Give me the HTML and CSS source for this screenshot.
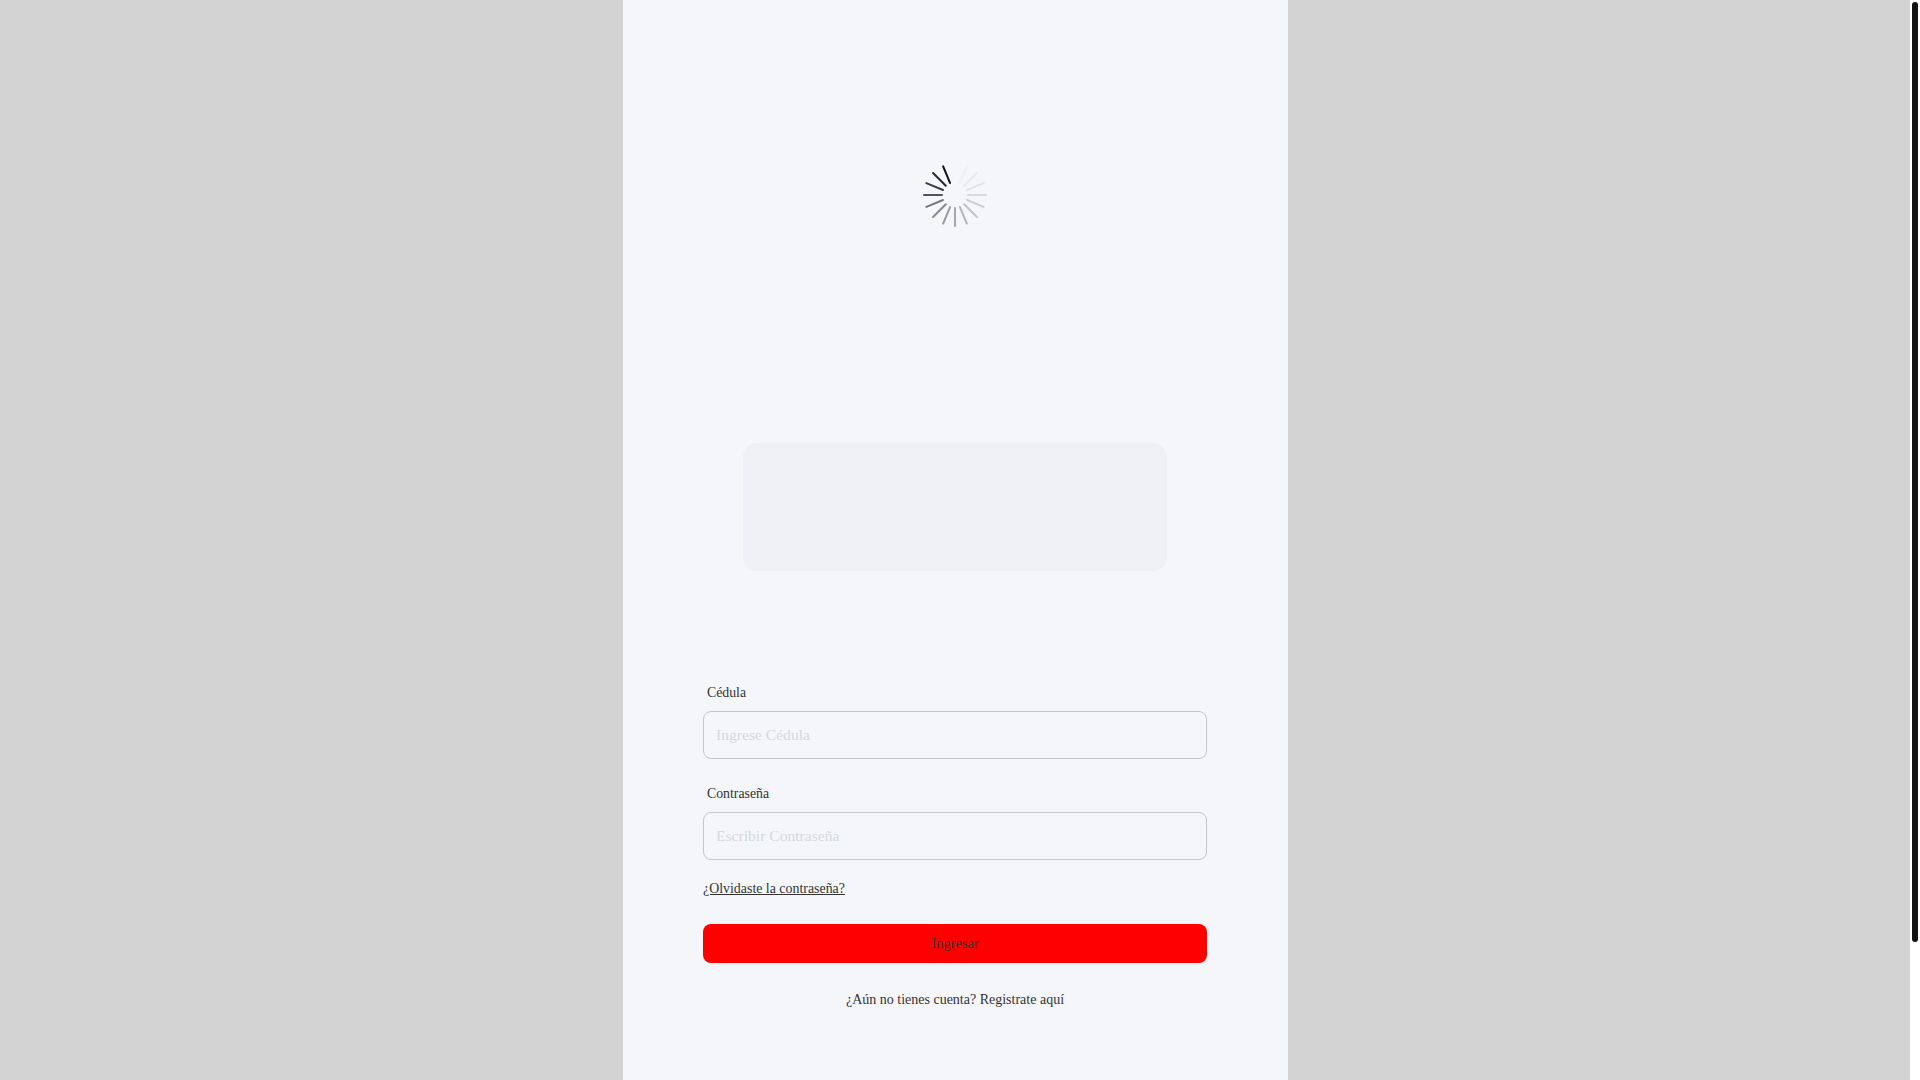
FILE: index.html
```html
<!DOCTYPE html>
<html lang="es">
<head>
    <meta charset="UTF-8">
    <meta name="viewport" content="width=device-width, initial-scale=1.0">
    <title>Ingresar</title>
    <link rel="stylesheet" href="styles.css">
</head>
<body>
    <div class="login-container">
        <div class="spinner-box">
            <svg class="spinner" viewBox="-32 -32 64 64" aria-hidden="true">
                <g stroke="#111" stroke-width="2" stroke-linecap="round">
                    <line x1="0" y1="-13" x2="0" y2="-31" opacity="1" transform="rotate(-22.5)"/>
                    <line x1="0" y1="-13" x2="0" y2="-31" opacity=".9" transform="rotate(-45)"/>
                    <line x1="0" y1="-13" x2="0" y2="-31" opacity=".8" transform="rotate(-67.5)"/>
                    <line x1="0" y1="-13" x2="0" y2="-31" opacity=".7" transform="rotate(-90)"/>
                    <line x1="0" y1="-13" x2="0" y2="-31" opacity=".55" transform="rotate(-112.5)"/>
                    <line x1="0" y1="-13" x2="0" y2="-31" opacity=".47" transform="rotate(-135)"/>
                    <line x1="0" y1="-13" x2="0" y2="-31" opacity=".4" transform="rotate(-157.5)"/>
                    <line x1="0" y1="-13" x2="0" y2="-31" opacity=".34" transform="rotate(180)"/>
                    <line x1="0" y1="-13" x2="0" y2="-31" opacity=".28" transform="rotate(157.5)"/>
                    <line x1="0" y1="-13" x2="0" y2="-31" opacity=".22" transform="rotate(135)"/>
                    <line x1="0" y1="-13" x2="0" y2="-31" opacity=".17" transform="rotate(112.5)"/>
                    <line x1="0" y1="-13" x2="0" y2="-31" opacity=".12" transform="rotate(90)"/>
                    <line x1="0" y1="-13" x2="0" y2="-31" opacity=".08" transform="rotate(67.5)"/>
                    <line x1="0" y1="-13" x2="0" y2="-31" opacity=".05" transform="rotate(45)"/>
                    <line x1="0" y1="-13" x2="0" y2="-31" opacity=".02" transform="rotate(22.5)"/>
                </g>
            </svg>
        </div>

        <div class="image-placeholder"></div>

        <form class="login-form">
            <label class="field-label" for="cedula">Cédula</label>
            <input class="field-input" id="cedula" type="text" placeholder="Ingrese Cédula">

            <label class="field-label second" for="clave">Contraseña</label>
            <input class="field-input" id="clave" type="password" placeholder="Escribir Contraseña">

            <a class="forgot-link" href="#">¿Olvidaste la contraseña?</a>

            <button class="btn-login" type="button">Ingresar</button>

            <p class="register-text">¿Aún no tienes cuenta? Registrate aquí</p>
        </form>
    </div>

    <div class="scroll-track">
        <div class="scroll-thumb"></div>
    </div>
</body>
</html>
```

FILE: styles.css
```css
html, body {
    height: 100%;
    overflow: hidden;
}

body {
    font-family: "Liberation Serif", serif;
    background-color: #d3d3d3;
    color: #333;
    margin: 0;
    padding: 0 10px 0 0;
    box-sizing: border-box;
}

.login-container {
    width: 665px;
    height: 1080px;
    margin: 0 auto;
    padding: 0 80.5px;
    box-sizing: border-box;
    background-color: #f4f6fa;
}

.spinner-box {
    display: flex;
    justify-content: center;
    padding-top: 163px;
}

.spinner {
    display: block;
    width: 64px;
    height: 64px;
}

.image-placeholder {
    width: 424px;
    height: 128px;
    margin: 216px auto 0;
    background-color: #eff0f5;
    border-radius: 14px;
}

.login-form {
    display: flex;
    flex-direction: column;
    margin-top: 114px;
}

.field-label {
    font-size: 13.8px;
    line-height: 16px;
    padding-left: 4px;
    margin-bottom: 10px;
}

.field-label.second {
    margin-top: 27px;
}

.field-input {
    height: 48px;
    padding: 0 12px;
    box-sizing: border-box;
    font-family: inherit;
    font-size: 15.6px;
    background: transparent;
    border: 1px solid #c4c6c9;
    border-radius: 8px;
}

.field-input::placeholder {
    color: #d6d8da;
    opacity: 1;
}

.forgot-link {
    align-self: flex-start;
    margin-top: 21px;
    font-size: 13.9px;
    line-height: 16px;
    color: #333;
}

.btn-login {
    height: 39px;
    margin-top: 27px;
    font-family: inherit;
    font-size: 14.4px;
    color: #333;
    background-color: #ff0000;
    border: none;
    border-radius: 8px;
}

.register-text {
    margin: 29px 0 0;
    font-size: 14px;
    line-height: 16px;
    text-align: center;
}

/* scrollbar drawn by hand, the browser hides the real one in screenshots */
.scroll-track {
    position: fixed;
    top: 0;
    right: 0;
    width: 10px;
    height: 100%;
    background-color: #fff;
}

.scroll-thumb {
    position: absolute;
    top: 2px;
    left: 2px;
    width: 6px;
    height: 940px;
    background-color: #111;
    border-radius: 3px;
}
```
